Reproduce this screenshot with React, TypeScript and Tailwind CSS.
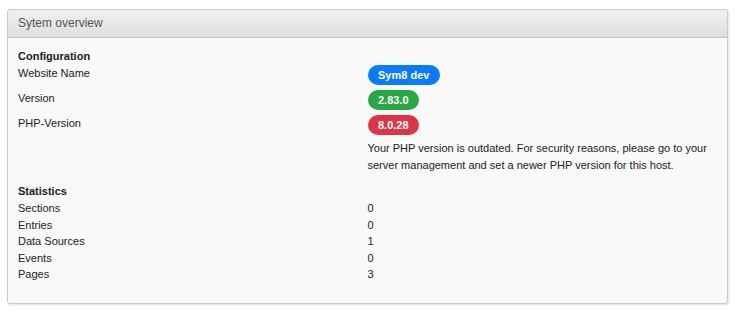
import React from "react";

const config = [
  { label: "Website Name", value: "Sym8 dev", color: "bg-[#0a7bff]" },
  { label: "Version", value: "2.83.0", color: "bg-[#28a745]" },
  { label: "PHP-Version", value: "8.0.28", color: "bg-[#dc3545]" },
];

const stats = [
  { label: "Sections", value: 0 },
  { label: "Entries", value: 0 },
  { label: "Data Sources", value: 1 },
  { label: "Events", value: 0 },
  { label: "Pages", value: 3 },
];

const Badge = ({ text, color }: { text: string; color: string }) => (
  <span
    className={`inline-block h-[20px] rounded-full px-[10.5px] text-[11px] font-bold leading-[20px] text-white ${color}`}
  >
    {text}
  </span>
);

export default function App() {
  return (
    <div className="min-h-[314px] bg-white px-[7px] pt-[9px] font-['Liberation_Sans',Arial,sans-serif] text-[11px] leading-[17px] text-[#222]">
      {/* Panel */}
      <div className="w-[721px] rounded-[3px] border border-[#c9cac9] bg-[#f8f9f8] shadow-[1px_1px_2px_rgba(0,0,0,0.12)]">
        <div className="flex h-[28px] items-center rounded-t-[3px] border-b border-[#c4c5c4] bg-gradient-to-b from-[#f0f0f0] to-[#dfdfdf] px-[10px] text-[12px] text-[#555]">
          Sytem overview
        </div>

        <div className="px-[10px] pb-[20px] pt-[10px]">
          <div className="font-bold">Configuration</div>
          {config.map((row) => (
            <div key={row.label} className="grid grid-cols-2 pb-[5px]">
              <div>{row.label}</div>
              <div>
                <Badge text={row.value} color={row.color} />
              </div>
            </div>
          ))}
          <div className="grid grid-cols-2">
            <div />
            <div className="pr-[4px]">
              Your PHP version is outdated. For security reasons, please go to
              your server management and set a newer PHP version for this host.
            </div>
          </div>

          <div className="mt-[9px] font-bold">Statistics</div>
          {stats.map((row) => (
            <div key={row.label} className="grid grid-cols-2 leading-[16.6px]">
              <div>{row.label}</div>
              <div>{row.value}</div>
            </div>
          ))}
        </div>
      </div>
    </div>
  );
}
